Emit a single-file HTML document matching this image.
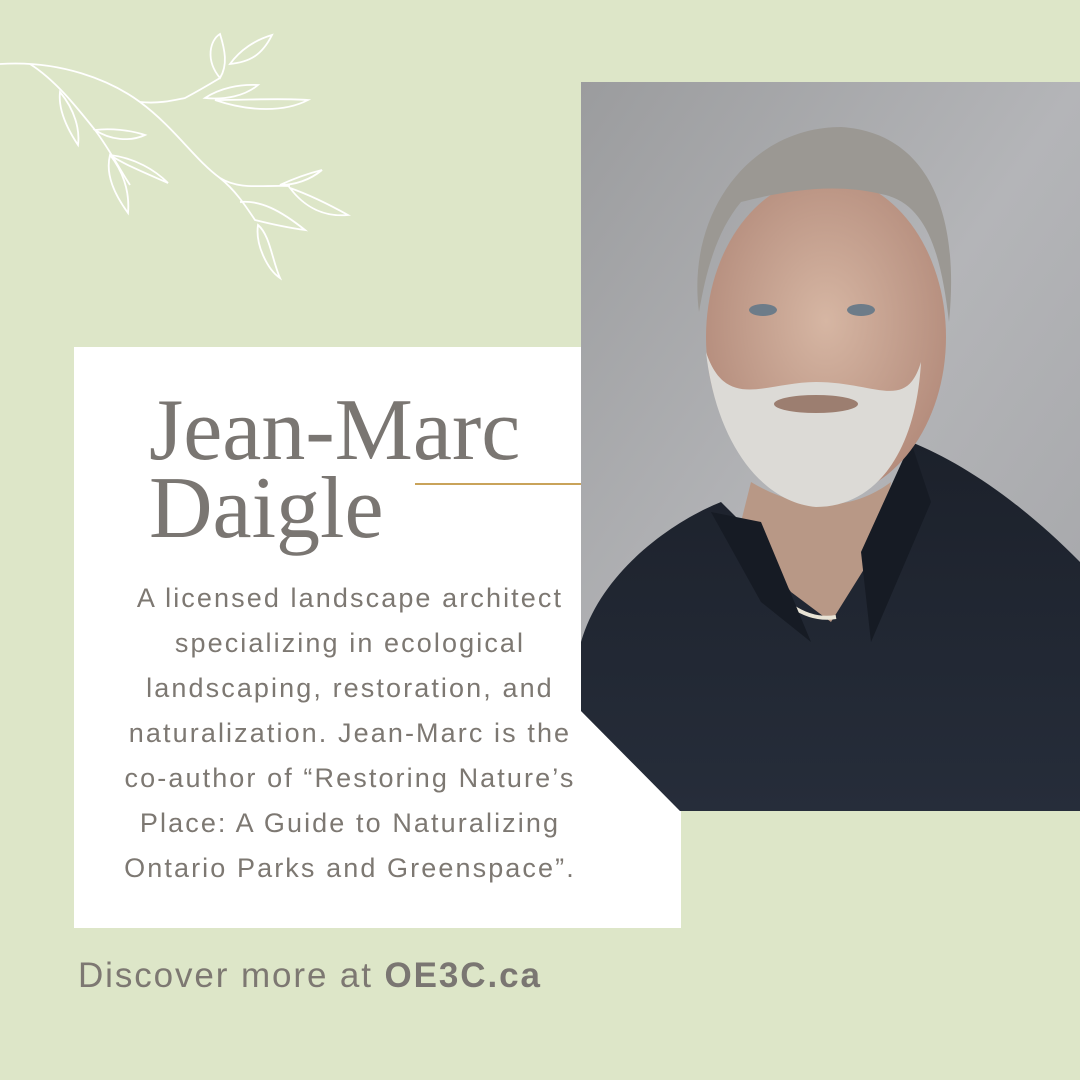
<!DOCTYPE html>
<html><head><meta charset="utf-8"><style>
html,body{margin:0;padding:0}
body{width:1080px;height:1080px;background:#dde6c8;position:relative;overflow:hidden;font-family:"Liberation Sans",sans-serif}
.card{position:absolute;left:74px;top:347px;width:607px;height:581px;background:#fff}
.name{position:absolute;left:149px;top:392px;font-family:"Liberation Serif",serif;font-size:88px;line-height:78px;color:#7a7672}
.gold{position:absolute;left:415px;top:483px;width:166px;height:2px;background:#c9a35a}
.body{position:absolute;left:50px;width:600px;top:576px;text-align:center;font-size:27px;letter-spacing:2.1px;line-height:45px;color:#7d7872}
.foot{position:absolute;left:78px;top:956px;font-size:35px;letter-spacing:1.9px;color:#7d7872}
.foot b{color:#7a7672}
svg.photo{position:absolute;left:581px;top:82px}
svg.leaf{position:absolute;left:0;top:20px}
</style></head><body>
<svg class="leaf" width="360" height="270" viewBox="0 0 360 270" fill="none" stroke="#fff" stroke-width="1.8">
<path d="M0 44 C60 40 110 60 140 82 C175 108 195 140 220 158 C240 170 260 165 290 166"/>
<path d="M140 82 C160 84 175 80 185 78 C200 70 210 64 220 58"/>
<path d="M30 44 C55 60 75 85 95 110 C110 130 120 150 130 165"/>
<path d="M220 58 C205 40 210 20 220 14 C225 30 228 45 220 58Z"/>
<path d="M230 44 C240 30 255 20 272 15 C262 35 250 42 230 44Z"/>
<path d="M205 78 C220 68 240 64 258 65 C245 76 225 80 205 78Z"/>
<path d="M215 80 C250 80 280 78 308 80 C285 92 250 92 215 80Z"/>
<path d="M60 72 C58 90 68 110 78 125 C80 110 75 90 60 72Z"/>
<path d="M95 110 C110 108 130 110 145 115 C130 122 110 120 95 110Z"/>
<path d="M110 135 C125 145 150 155 168 163 C155 150 135 138 110 135Z"/>
<path d="M110 135 C105 155 115 175 128 193 C130 170 122 150 110 135Z"/>
<path d="M220 158 C235 170 245 185 255 200 C275 205 290 208 305 210 C280 190 260 180 240 182"/>
<path d="M280 165 C295 158 310 153 322 150 C310 160 295 165 280 165Z"/>
<path d="M290 168 C310 175 330 185 348 195 C325 197 305 188 290 168Z"/>
<path d="M258 205 C270 215 272 240 280 258 C268 250 255 225 258 205Z"/>
</svg>
<div class="card"></div>
<svg class="photo" width="499" height="729" viewBox="0 0 499 729">
<defs>
<clipPath id="c"><path d="M0 0H499V729H99L0 629Z"/></clipPath>
<linearGradient id="bg" x1="0" y1="0" x2="1" y2="1"><stop offset="0" stop-color="#9b9c9e"/><stop offset=".5" stop-color="#b4b5b8"/><stop offset="1" stop-color="#a3a4a7"/></linearGradient>
<radialGradient id="sk" cx=".5" cy=".45" r=".55"><stop offset="0" stop-color="#d6b6a3"/><stop offset="1" stop-color="#b48c7c"/></radialGradient>
<linearGradient id="sh" x1="0" y1="0" x2="0" y2="1"><stop offset="0" stop-color="#1c212b"/><stop offset="1" stop-color="#262d3a"/></linearGradient>
</defs>
<g clip-path="url(#c)">
<rect width="499" height="729" fill="url(#bg)"/>
<path d="M0 560 C20 490 90 440 140 420 L190 470 L230 520 L300 450 L330 360 C380 380 440 420 499 480 V729 H0Z" fill="url(#sh)"/>
<path d="M160 440 L210 510 L250 540 L300 460 L310 400 C270 430 220 430 170 400Z" fill="#b89886"/>
<path d="M175 480 C195 520 225 540 255 535" stroke="#e9e4d6" stroke-width="4" fill="none"/>
<path d="M130 430 L180 440 L230 560 L180 520Z" fill="#161b24"/>
<path d="M330 360 L350 420 L290 560 L280 470Z" fill="#161b24"/>
<ellipse cx="245" cy="255" rx="120" ry="160" fill="url(#sk)"/>
<path d="M118 230 C105 130 170 45 260 45 C340 50 380 120 368 240 C360 170 345 120 300 112 C250 100 200 110 160 120 C135 150 125 190 118 230Z" fill="#9b9893"/>
<path d="M125 270 C135 360 180 420 235 425 C295 425 335 370 340 280 C325 330 295 300 235 300 C185 300 145 330 125 270Z" fill="#dcdad6"/>
<ellipse cx="235" cy="322" rx="42" ry="9" fill="#9c7e70"/>
<ellipse cx="182" cy="228" rx="14" ry="6" fill="#6d7c89"/>
<ellipse cx="280" cy="228" rx="14" ry="6" fill="#6d7c89"/>
</g>
</svg>
<div class="name">Jean-Marc<br>Daigle</div>
<div class="gold"></div>
<div class="body">A licensed landscape architect<br>specializing in ecological<br>landscaping, restoration, and<br>naturalization. Jean-Marc is the<br>co-author of “Restoring Nature’s<br>Place: A Guide to Naturalizing<br>Ontario Parks and Greenspace”.</div>
<div class="foot">Discover more at <b>OE3C.ca</b></div>
</body></html>
